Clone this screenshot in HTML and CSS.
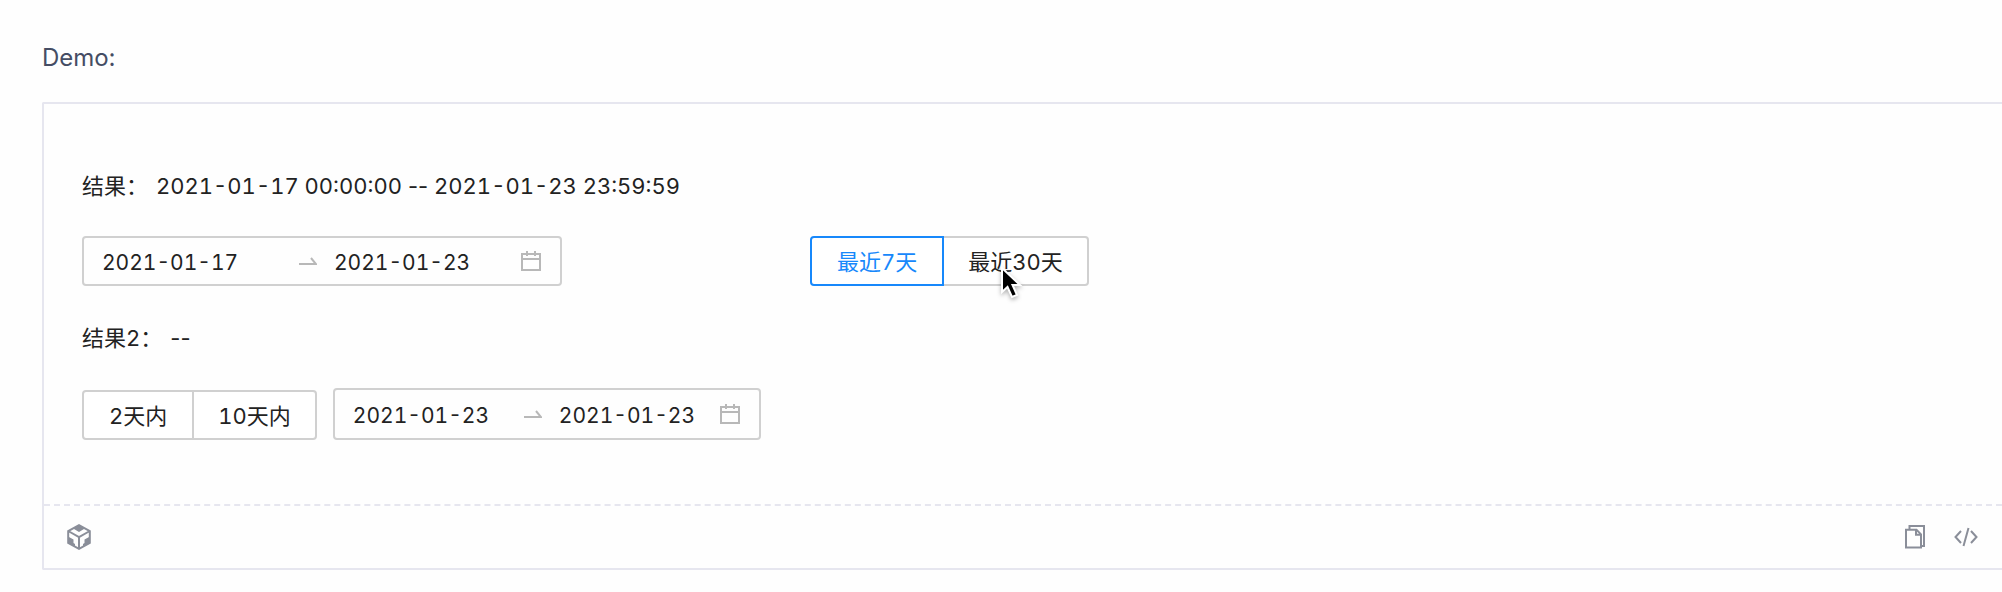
FILE: index.html
```html
<!DOCTYPE html>
<html lang="zh-CN">
<head>
<meta charset="utf-8">
<title>Demo</title>
<link rel="stylesheet" href="styles.css">
</head>
<body>
<main class="page">
  <p class="page-title">Demo:</p>
  <section class="demo">
    <div class="demo-content">
      <p class="result"><span>结果：</span><span>2021-01-17 00:00:00 <span class="dash">--</span> 2021-01-23 23:59:59</span></p>
      <div class="row row-spread">
        <div class="picker picker-wide">
          <input type="text" value="2021-01-17" aria-label="开始日期">
          <svg class="arrow" viewBox="0 0 18 8" aria-hidden="true"><path d="M0 7H17L12 1"/></svg>
          <input type="text" value="2021-01-23" aria-label="结束日期">
          <svg class="calendar" viewBox="0 0 20 20" aria-hidden="true"><path d="M1 3H19V19H1ZM1 8H19M6 0V5M14 0V5"/></svg>
        </div>
        <div class="button-group">
          <button type="button" class="btn active">最近7天</button>
          <button type="button" class="btn">最近30天<svg class="cursor" viewBox="0 0 24 36" aria-hidden="true"><path d="M2 2V26L7.500 21L12 31L17 29L12.500 19H20Z"/></svg></button>
        </div>
      </div>
      <p class="result"><span>结果2：</span><span class="dash">--</span></p>
      <div class="row row-compact">
        <div class="button-group">
          <button type="button" class="btn">2天内</button>
          <button type="button" class="btn">10天内</button>
        </div>
        <div class="picker picker-tall">
          <input type="text" value="2021-01-23" aria-label="开始日期">
          <svg class="arrow" viewBox="0 0 18 8" aria-hidden="true"><path d="M0 7H17L12 1"/></svg>
          <input type="text" value="2021-01-23" aria-label="结束日期">
          <svg class="calendar" viewBox="0 0 20 20" aria-hidden="true"><path d="M1 3H19V19H1ZM1 8H19M6 0V5M14 0V5"/></svg>
        </div>
      </div>
    </div>
    <footer class="demo-actions">
      <button type="button" class="icon-btn" aria-label="CodeSandbox">
        <svg width="24" height="26" viewBox="0 0 24 26"><path class="fill" d="M7 3.500L12 1L17 3.500V5L12 8L7 5ZM1 12.500L6.500 15.500V19L8 20V23L1 19ZM23 12.500L17.500 15.500V19L16 20V23L23 19Z"/><path d="M12 1.200L22.800 7V19L12 24.800L1.200 19V7ZM1.200 7L12 13L22.800 7M12 13V24.800"/></svg>
      </button>
      <button type="button" class="icon-btn icon-copy" aria-label="复制代码">
        <svg width="20" height="24" viewBox="0 0 20 24"><path d="M4.500 4V1H19V21H16M1 4.800H11.500L16 9.300V22.500H1ZM11 4.800V9.800H16"/></svg>
      </button>
      <button type="button" class="icon-btn" aria-label="显示代码">
        <svg width="24" height="20" viewBox="0 0 24 20"><path d="M7 4L1.500 10L7 16M17 4L22.500 10L17 16M14.500 1L9.500 19"/></svg>
      </button>
    </footer>
  </section>
</main>
</body>
</html>
```
FILE: styles.css
```css
* {
  box-sizing: border-box;
}

body {
  margin: 0;
  background: #fefefe;
  color: #222;
  font-family: Inter, "Noto Sans CJK SC", sans-serif;
  font-size: 22px;
  font-variant-numeric: tabular-nums;
}

p {
  margin: 0;
}

.page {
  padding: 40px 0 22px 42px;
}

.page-title {
  margin-bottom: 26px;
  color: #454d64;
  font-size: 24px;
  line-height: 36px;
}

.demo {
  border: 2px solid #e6e6ef;
  border-right: 0;
  border-radius: 2px 0 0 2px;
}

.demo-content {
  display: flex;
  flex-direction: column;
  gap: 32px;
  padding: 64px 38px;
}

.result {
  display: flex;
  gap: 8px;
  line-height: 36px;
}

.dash {
  font-variant-numeric: normal;
}

.row {
  display: flex;
  height: 52px;
}

.row-spread {
  align-items: flex-start;
  gap: 248px;
}

.row-compact {
  align-items: flex-end;
  gap: 16px;
}

.picker {
  display: flex;
  align-items: center;
  width: 428px;
  height: 50px;
  padding: 0 19px 0 18px;
  border: 2px solid #d0d0d0;
  border-radius: 4px;
}

.picker-wide {
  width: 480px;
}

.picker-tall {
  height: 52px;
}

.picker input {
  flex: 1;
  min-width: 0;
  padding: 2px 0 0;
  border: 0;
  outline: 0;
  background: transparent;
  color: inherit;
  font: inherit;
  font-size: 21px;
  font-variant-numeric: inherit;
}

.arrow {
  width: 18px;
  height: 8px;
  margin: 0 17px 0 10px;
}

.calendar {
  width: 20px;
  height: 20px;
}

.arrow path,
.calendar path {
  fill: none;
  stroke: #b8b8b8;
  stroke-width: 2;
}

.button-group {
  display: flex;
}

.btn {
  position: relative;
  height: 50px;
  padding: 0 25px 2px;
  border: 2px solid #d0d0d0;
  background: #fff;
  color: inherit;
  font: inherit;
  font-variant-numeric: inherit;
}

.btn:first-child {
  border-radius: 4px 0 0 4px;
}

.btn:last-child {
  margin-left: -2px;
  padding: 0 24px 2px;
  border-radius: 0 4px 4px 0;
}

.btn.active {
  z-index: 1;
  border-color: #1788fb;
  color: #1788fb;
}

.cursor {
  position: absolute;
  top: 28px;
  left: 56px;
  width: 24px;
  height: 36px;
  filter: drop-shadow(0 2px 2px rgba(0, 0, 0, 0.3));
}

.cursor path {
  fill: #000;
  stroke: #fff;
  stroke-width: 2;
}

.demo-actions {
  display: flex;
  align-items: center;
  height: 64px;
  padding: 0 24px 0 23px;
  border-top: 2px dashed #e6e6ef;
}

.icon-btn {
  display: flex;
  padding: 0;
  border: 0;
  background: none;
}

.icon-btn path {
  fill: none;
  stroke: #8a8e99;
  stroke-width: 2;
}

.icon-btn .fill {
  fill: #8a8e99;
  stroke: none;
}

.icon-copy {
  margin: 0 29px 0 auto;
}
```
